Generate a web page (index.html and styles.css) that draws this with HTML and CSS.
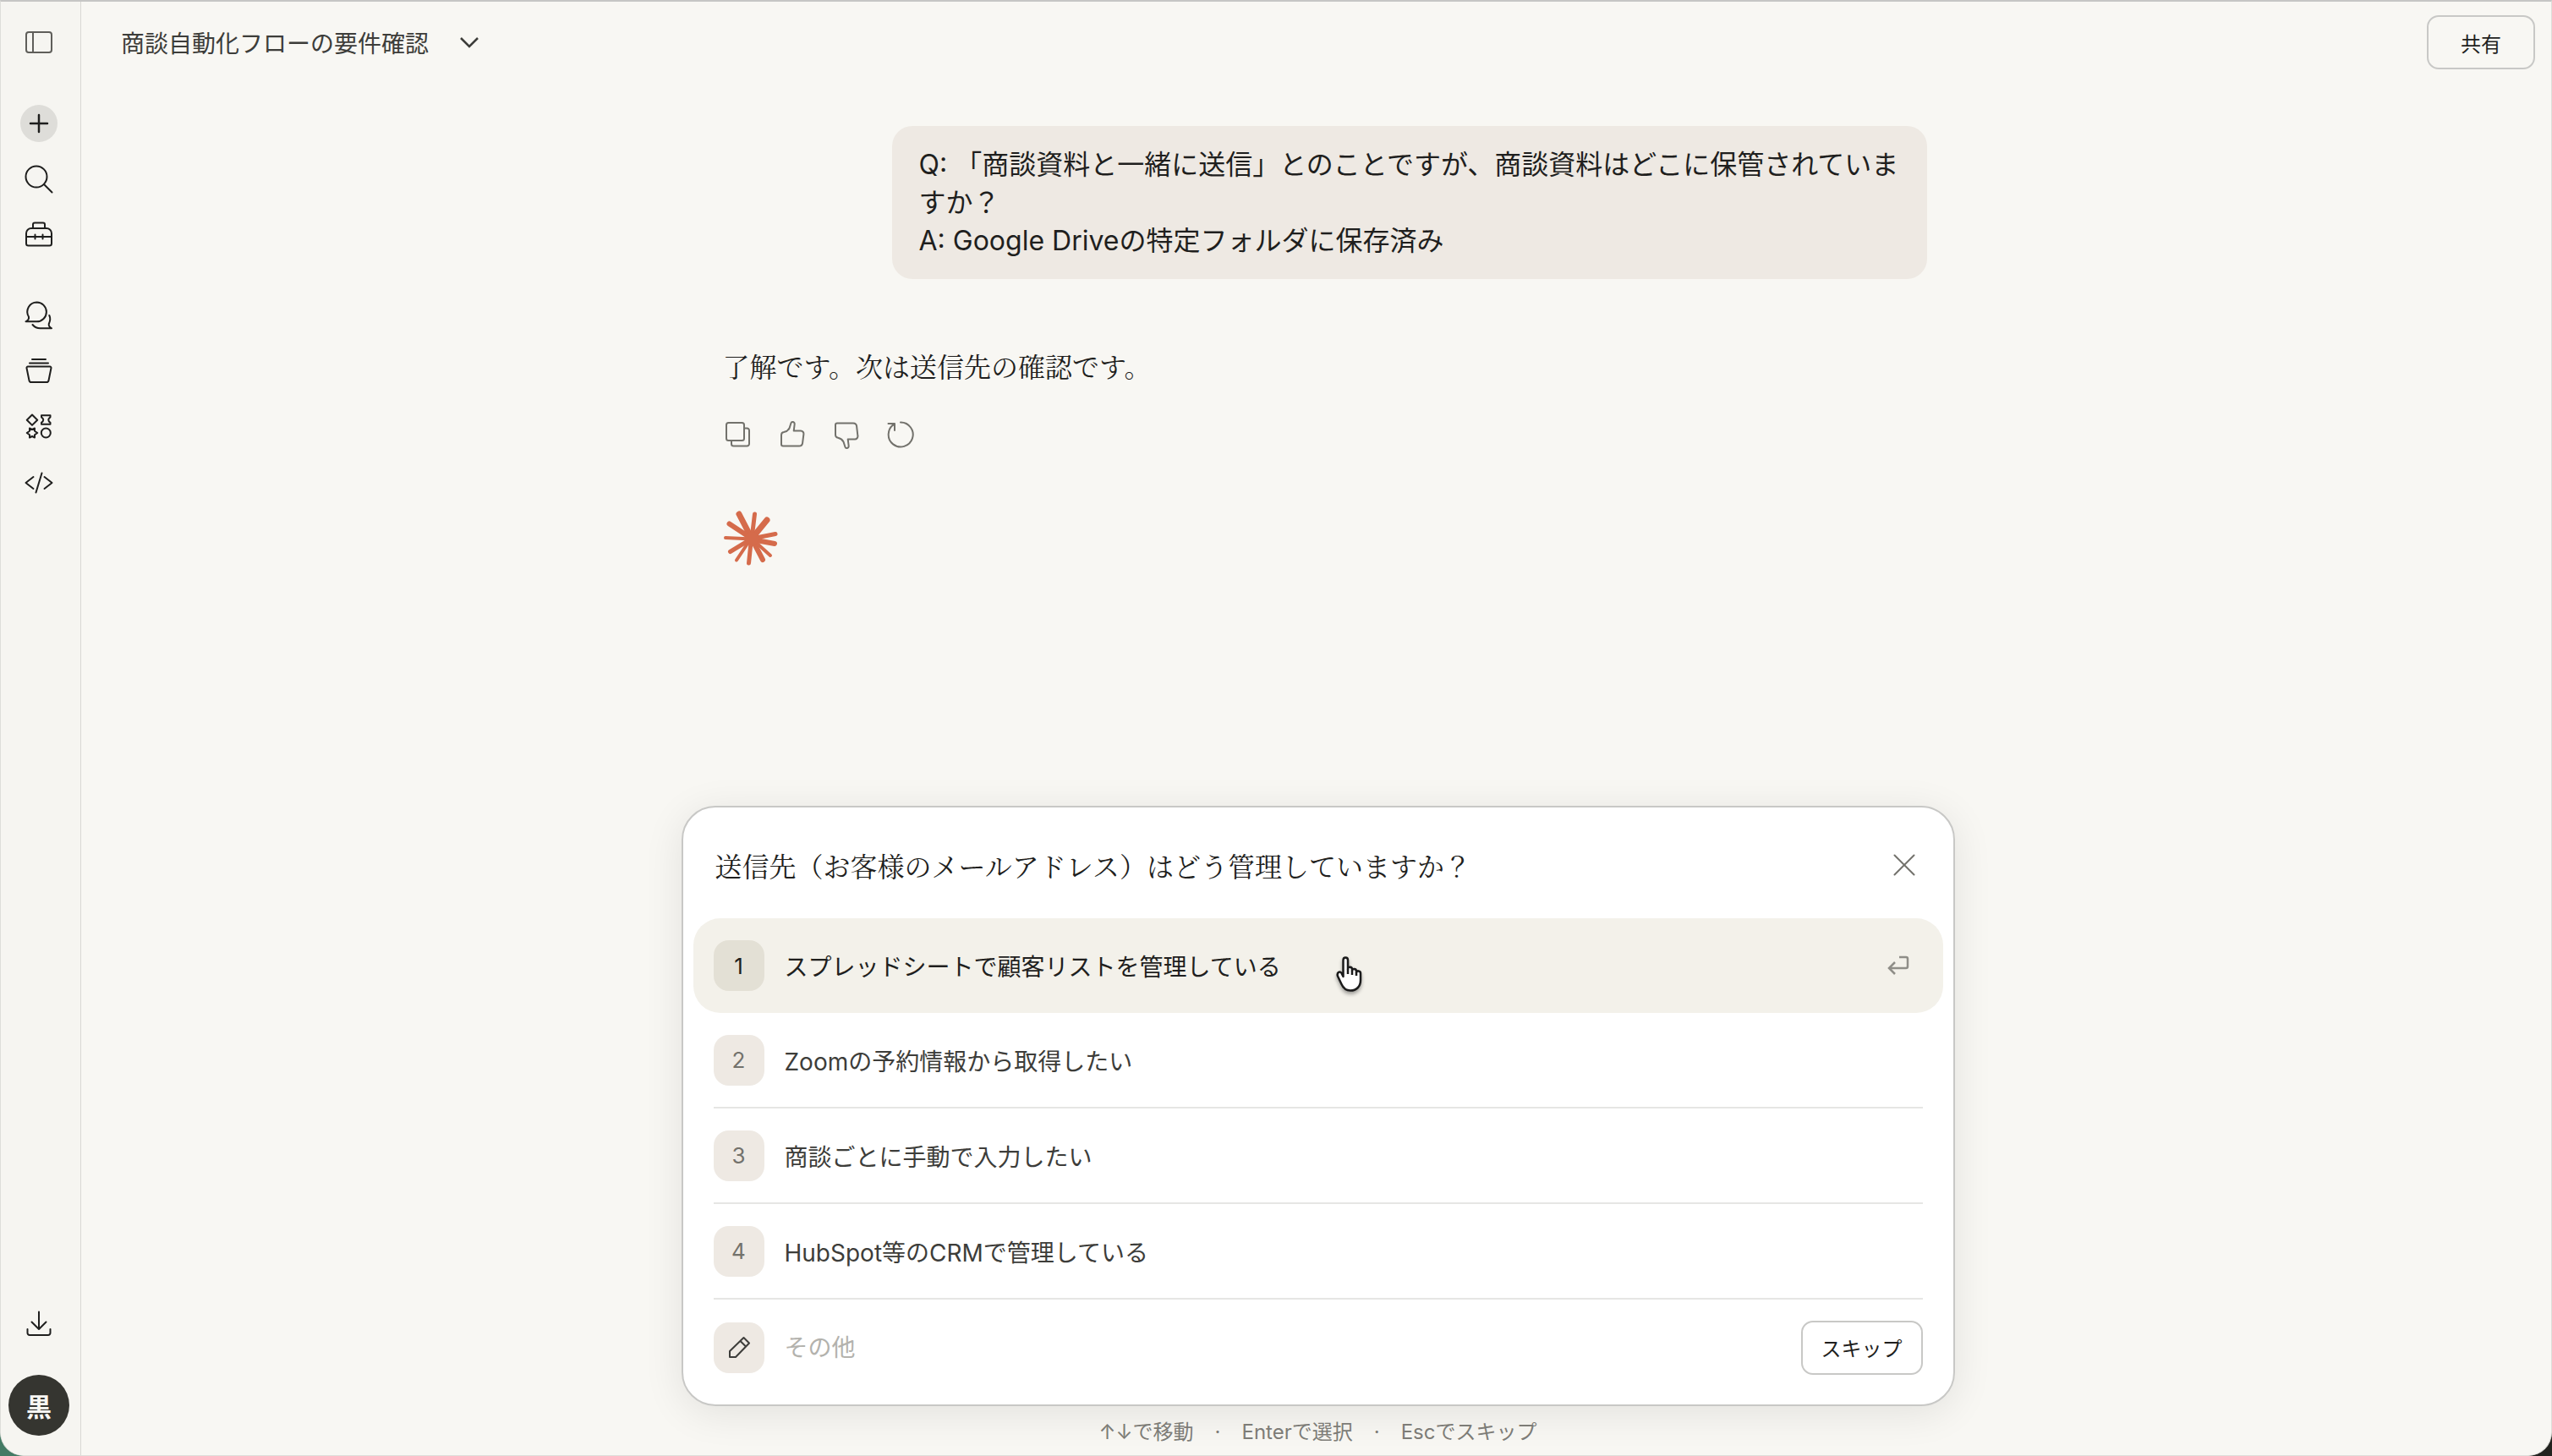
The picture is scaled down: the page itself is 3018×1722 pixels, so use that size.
FILE: index.html
```html
<!DOCTYPE html>
<html lang="ja">
<head>
<meta charset="utf-8">
<meta name="viewport" content="width=device-width, initial-scale=1">
<title>商談自動化フローの要件確認</title>
<link rel="stylesheet" href="styles.css">
</head>
<body>
<div class="app">
  <nav class="sidebar" aria-label="メイン">
    <button class="nav-button nav-toggle" aria-label="サイドバーを開く">
      <svg class="icon icon-soft" viewBox="0 0 36 36"><rect x="3" y="5" width="30" height="24" rx="3"/><path d="M11 5v24"/></svg>
    </button>
    <div class="nav-group">
      <button class="nav-button" aria-label="新規チャット">
        <span class="plus"><svg class="icon icon-bold" viewBox="0 0 36 36"><path d="M18 8v20M8 18h20"/></svg></span>
      </button>
      <button class="nav-button" aria-label="検索">
        <svg class="icon" viewBox="0 0 36 36"><circle cx="15" cy="15" r="12.5"/><path d="M24 24l9.500 9.500"/></svg>
      </button>
      <button class="nav-button" aria-label="カスタマイズ">
        <svg class="icon" viewBox="0 0 36 36"><path d="M11 10V5.500a2 2 0 0 1 2-2h10a2 2 0 0 1 2 2V10M9 10h18a6 6 0 0 1 6 6v12a2.500 2.500 0 0 1-2.500 2.500h-25A2.500 2.500 0 0 1 3 28V16a6 6 0 0 1 6-6zM3 20h30M13.500 17.500v5M22.500 17.500v5"/></svg>
      </button>
    </div>
    <div class="nav-group">
      <button class="nav-button" aria-label="チャット">
        <svg class="icon" viewBox="0 0 36 36"><path d="M15.500 2.500a11.300 11.300 0 0 1 0 22.800H2.500c2.800-1.500 4-3.200 3.500-5.600A11.300 11.300 0 0 1 15.500 2.500zM10.500 29c2.500 3 5 4.300 9 4.300h13.500c-2.600-1.500-3.700-3-3.200-5.300 1.800-3.700 1.900-7 .5-10"/></svg>
      </button>
      <button class="nav-button" aria-label="プロジェクト">
        <svg class="icon" viewBox="0 0 36 36"><path d="M10 4h16M7 8.500h22M5 12.500h26a1.500 1.500 0 0 1 1.500 1.800l-3 14.700a2.500 2.500 0 0 1-2.500 2H9a2.500 2.500 0 0 1-2.500-2l-3-14.700A1.500 1.500 0 0 1 5 12.500z"/></svg>
      </button>
      <button class="nav-button" aria-label="アーティファクト">
        <svg class="icon" viewBox="0 0 36 36"><path d="M10 3.500l6.200 6.200-6.200 6.200-6.200-6.200zM21 4.300h10.500v2c-3 2-3 4.500 0 6.500v2H21v-2c3-2 3-4.500 0-6.500zM7 19.500l3 1.500 3-1.500v3.200l3.200 2.300-3.200 2.300v3.200l-3-1.500-3 1.500v-3.200L3.800 25 7 22.700z"/><circle cx="26.300" cy="25" r="5.500"/></svg>
      </button>
      <button class="nav-button" aria-label="コード">
        <svg class="icon" viewBox="0 0 36 36"><path d="M11.500 11L2.500 18l9 7M24.500 11l9 7-9 7M21.500 6.500l-7 23"/></svg>
      </button>
    </div>
    <div class="nav-foot">
      <button class="nav-button" aria-label="アプリを入手">
        <svg class="icon" viewBox="0 0 36 36"><path d="M18 3.500v20M9.500 15.500L18 24l8.500-8.500M4.500 24v4.500a2.500 2.500 0 0 0 2.500 2.500h22a2.500 2.500 0 0 0 2.500-2.500V24"/></svg>
      </button>
      <button class="avatar">黒</button>
    </div>
  </nav>

  <main class="main">
    <header class="topbar">
      <button class="chat-title">商談自動化フローの要件確認
        <svg class="chevron" viewBox="0 0 24 14"><path d="M2 2l10 10L22 2"/></svg>
      </button>
      <button class="outline-button share">共有</button>
    </header>

    <section class="thread">
      <div class="bubble">Q: 「商談資料と一緒に送信」とのことですが、商談資料はどこに保管されていますか？<br>A: Google Driveの特定フォルダに保存済み</div>
      <div class="reply">
        <p class="reply-text">了解です。次は送信先の確認です。</p>
        <div class="actions">
          <button class="action" aria-label="コピー"><svg class="icon" viewBox="0 0 36 36"><rect x="4" y="4" width="21" height="21" rx="2.500"/><path d="M25 10.500h3.500A2.500 2.500 0 0 1 31 13v16a2.500 2.500 0 0 1-2.500 2.500h-16A2.500 2.500 0 0 1 10 29v-4"/></svg></button>
          <button class="action" aria-label="良い回答"><svg class="icon" viewBox="0 0 36 36"><path d="M14.500 10.500l2-6.300c.6-2 4.200-1.700 4.200 1.300l-1 8h8.300a3.500 3.500 0 0 1 3.400 4l-1.300 10.300a4.200 4.200 0 0 1-4.100 3.700H7a2 2 0 0 1-2-2v-11a3.500 3.500 0 0 1 3-3.400c3-.6 5-1.800 6.500-4.600z"/></svg></button>
          <button class="action" aria-label="良くない回答"><svg class="icon" viewBox="0 0 36 36"><path d="M14.500 26.500l2 6.300c.6 2 4.200 1.700 4.200-1.300l-1-8h8.300a3.500 3.500 0 0 0 3.400-4L30.100 8.200A4.200 4.200 0 0 0 26 4.500H7a2 2 0 0 0-2 2v11.800a3.500 3.500 0 0 0 3 3.400c3 .6 5 2 6.500 4.800z"/></svg></button>
          <button class="action" aria-label="再試行"><svg class="icon" viewBox="0 0 36 36"><path d="M18 3.500a14.500 14.500 0 1 1-7.500 2.200M3.500 5h7.500v8"/></svg></button>
        </div>
        <svg class="spark" viewBox="0 0 66 66" aria-hidden="true">
          <g stroke="#d56b4b" stroke-linecap="round">
            <path stroke-width="7" d="M34 33L19 4M34 33L52 11"/>
            <path stroke-width="6" d="M34 33L7.500 15.500M34 34L61 39M34 33L47 58"/>
            <path stroke-width="5" d="M34 33L37.500 4M34 33L62 27.500M33.500 33L30.500 62M34 33L8.500 48.500"/>
            <path stroke-width="4" d="M34 33L56 53M33 33L16 58.500M34 33.500L3 32"/>
          </g>
          <circle cx="34" cy="33" r="8" fill="#d56b4b"/>
        </svg>
      </div>
    </section>

    <section class="composer">
      <div class="card">
        <div class="card-head">
          <h2 class="question">送信先（お客様のメールアドレス）はどう管理していますか？</h2>
          <button class="close" aria-label="閉じる"><svg class="icon" viewBox="0 0 36 36"><path d="M6.500 6.500l23 23M29.500 6.500l-23 23"/></svg></button>
        </div>
        <ul class="options">
          <li><button class="option is-active"><span class="badge">1</span><span class="label">スプレッドシートで顧客リストを管理している</span>
            <svg class="enter" viewBox="0 0 26 24"><path d="M14 2h8a2 2 0 0 1 2 2v9a2 2 0 0 1-2 2H3M9 8l-7 7 7 7"/></svg></button>
            <svg class="pointer" viewBox="0 0 36 44" aria-hidden="true"><path d="M10.500 25V5.500c0-4 5.500-4 5.500 0V16c0-3 5-3 5 .5V18c0-3 5-2.500 5 .5V20c.5-2.500 5-2 5 1v8c0 8-5 12.500-12 12.500-6 0-8.500-3-10.500-7.500L4 24.500C2.500 20 7 18 8.500 21z"/><path d="M16 16v6M21 18v5M26 20v4"/></svg></li>
          <li><button class="option"><span class="badge">2</span><span class="label">Zoomの予約情報から取得したい</span></button></li>
          <li><button class="option"><span class="badge">3</span><span class="label">商談ごとに手動で入力したい</span></button></li>
          <li><button class="option"><span class="badge">4</span><span class="label">HubSpot等のCRMで管理している</span></button></li>
        </ul>
        <div class="other">
          <label class="badge" for="other"><svg class="pencil" viewBox="0 0 30 30"><path d="M20.500 3l6.500 6.500L11 26H4v-7zM16.500 7l6.500 6.500"/></svg></label>
          <input id="other" class="other-input" type="text" placeholder="その他" aria-label="その他">
          <button class="outline-button skip">スキップ</button>
        </div>
      </div>
      <p class="hints"><span>↑↓で移動</span><span>·</span><span>Enterで選択</span><span>·</span><span>Escでスキップ</span></p>
    </section>
  </main>
</div>
</body>
</html>
```
FILE: styles.css
```css
*,
*::before,
*::after {
  box-sizing: border-box;
}

:root {
  --sans: Inter, "Noto Sans CJK JP", sans-serif;
  --serif: "Noto Serif CJK JP", "Noto Serif JP", "Noto Sans CJK JP", serif;
  --page: #f8f7f3;
  --ink: #1f1f1e;
  --ink-soft: #3d3d3a;
  --muted: #73726c;
  --sand: #eee9e3;
  --line: #c8c8c6;
}

body {
  margin: 0;
  background: linear-gradient(90deg, #437a64 50%, #22231f 50%);
  color: var(--ink);
  font-family: var(--sans);
  font-size: 28px;
}

button {
  margin: 0;
  padding: 0;
  border: 0;
  background: none;
  color: inherit;
  font: inherit;
  cursor: pointer;
}

.app {
  display: flex;
  min-height: 100vh;
  border: 1px solid #dededa;
  border-top: 2px solid #c6c6c5;
  border-radius: 0 0 28px 28px;
  background: var(--page);
  overflow: hidden;
}

.icon {
  display: block;
  width: 36px;
  height: 36px;
  fill: none;
  stroke: currentColor;
  stroke-width: 2;
  stroke-linecap: round;
  stroke-linejoin: round;
}

.icon-soft {
  color: #5f5e5a;
}

.icon-bold {
  stroke-width: 2.5;
}

/* Sidebar */

.sidebar {
  display: flex;
  flex: none;
  flex-direction: column;
  gap: 29px;
  width: 95px;
  padding: 16px 4px 23px 0;
  border-right: 1px solid #d9d8d4;
  background: #f6f5f1;
}

.nav-group,
.nav-foot {
  display: flex;
  flex-direction: column;
  align-items: center;
}

.nav-foot {
  gap: 27px;
  margin-top: auto;
}

.nav-button {
  display: grid;
  place-items: center;
  width: 66px;
  height: 66px;
}

.nav-toggle {
  align-self: center;
}

.plus {
  display: grid;
  place-items: center;
  width: 44px;
  height: 44px;
  border-radius: 50%;
  background: #deddd9;
}

.avatar {
  width: 72px;
  height: 72px;
  border-radius: 50%;
  background: #353530;
  color: #f8f7f3;
  font-size: 30px;
  font-weight: 700;
}

/* Conversation */

.main {
  display: flex;
  flex: 1;
  flex-direction: column;
  min-width: 0;
  padding-left: 4px;
}

.topbar {
  display: flex;
  align-items: center;
  justify-content: space-between;
  height: 96px;
  padding: 0 19px 0 43px;
}

.chat-title {
  display: flex;
  align-items: center;
  gap: 36px;
  color: var(--ink-soft);
}

.chevron {
  width: 24px;
  height: 14px;
  fill: none;
  stroke: currentColor;
  stroke-width: 2.5;
}

.outline-button {
  height: 64px;
  border: 2px solid var(--line);
  border-radius: 14px;
  font-size: 24px;
}

.share {
  width: 128px;
}

.thread {
  display: flex;
  flex-direction: column;
  width: 100%;
  max-width: 1440px;
  margin: 0 auto;
  padding-top: 51px;
}

.bubble {
  align-self: flex-end;
  max-width: 85%;
  padding: 23px 32px;
  border-radius: 24px;
  background: var(--sand);
  font-size: 32px;
  line-height: 45px;
}

.reply {
  padding: 78px 16px 0;
}

.reply-text {
  margin: 0;
  font-family: var(--serif);
  font-size: 32px;
  line-height: 48px;
}

.actions {
  display: flex;
  gap: 28px;
  margin-top: 40px;
  color: var(--muted);
}

.spark {
  display: block;
  width: 66px;
  height: 66px;
  margin-top: 72px;
  fill: none;
}

/* Question card */

.composer {
  width: 100%;
  max-width: 1506px;
  margin: auto auto 0;
  padding-top: 32px;
}

.card {
  padding: 0 12px 11px;
  border: 2px solid var(--line);
  border-radius: 40px;
  background: #fff;
  box-shadow: 0 8px 48px rgba(0, 0, 0, 0.09);
}

.card-head {
  display: flex;
  align-items: center;
  justify-content: space-between;
  height: 131px;
  padding: 4px 28px 0 26px;
}

.question {
  margin: 0;
  font-family: var(--serif);
  font-size: 32px;
  font-weight: 400;
}

.close {
  color: var(--muted);
}

.options {
  margin: 0;
  padding: 0;
  list-style: none;
}

.options li {
  position: relative;
}

.options li + li {
  padding: 0 24px;
}

.option {
  display: flex;
  align-items: center;
  gap: 24px;
  width: 100%;
  height: 113px;
  border-bottom: 2px solid #e6e6e4;
  color: var(--ink-soft);
  text-align: left;
}

.option.is-active {
  height: 112px;
  padding: 0 40px 0 24px;
  border: 0;
  border-radius: 32px;
  background: #f3f1ea;
  color: var(--ink);
}

.badge {
  display: grid;
  flex: none;
  place-items: center;
  width: 60px;
  height: 60px;
  border-radius: 18px;
  background: var(--sand);
  color: var(--muted);
  font-size: 26px;
}

.is-active .badge {
  background: #e3e0d5;
  color: var(--ink);
}

.label {
  flex: 1;
}

.enter {
  width: 26px;
  height: 24px;
  fill: none;
  stroke: #8f8e88;
  stroke-width: 2.5;
}

.pointer {
  position: absolute;
  top: 44px;
  left: 758px;
  width: 36px;
  height: 44px;
  fill: #fff;
  stroke: #1b1b1b;
  stroke-width: 2.5;
  stroke-linejoin: round;
  filter: drop-shadow(0 3px 2px rgba(0, 0, 0, 0.35));
  pointer-events: none;
}

.other {
  display: flex;
  align-items: center;
  gap: 24px;
  height: 113px;
  padding: 0 24px;
}

.pencil {
  width: 30px;
  height: 30px;
  fill: none;
  stroke: var(--ink-soft);
  stroke-width: 2;
  stroke-linejoin: round;
}

.other-input {
  flex: 1;
  min-width: 0;
  padding: 0;
  border: 0;
  outline: 0;
  background: none;
  color: var(--ink);
  font: inherit;
}

.other-input::placeholder {
  color: #b3b2ad;
  opacity: 1;
}

.skip {
  width: 144px;
}

.hints {
  display: flex;
  justify-content: center;
  gap: 25px;
  margin: 0;
  padding: 14px 0 10px;
  color: #7d7c77;
  font-size: 24px;
  line-height: 34px;
}
```
